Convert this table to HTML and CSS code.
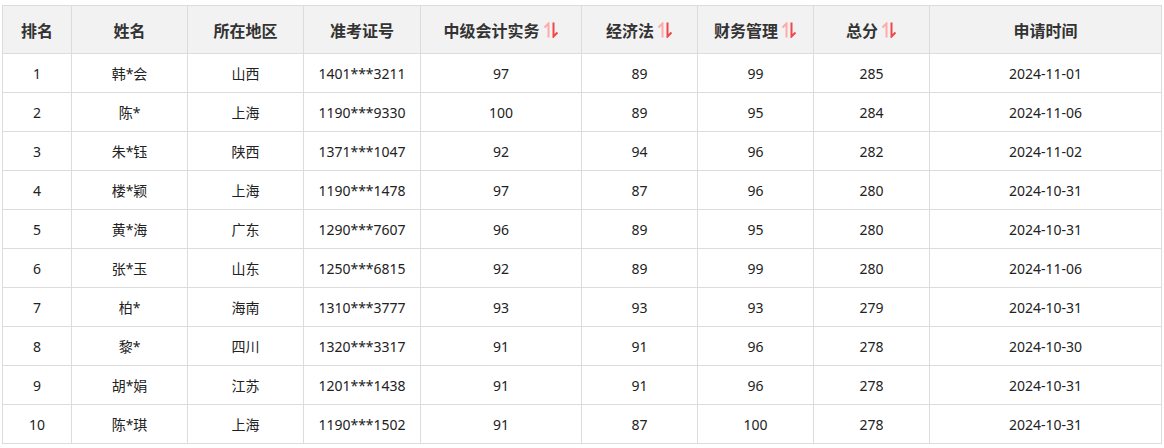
FILE: index.html
```html
<!DOCTYPE html>
<html lang="zh-CN">
<head>
<meta charset="utf-8">
<title>排名</title>
<link rel="stylesheet" href="styles.css">
</head>
<body>
<table class="rank">
  <colgroup>
    <col class="c-rank"><col class="c-name"><col class="c-area"><col class="c-id">
    <col class="c-sub1"><col class="c-sub2"><col class="c-sub3"><col class="c-total"><col class="c-date">
  </colgroup>
  <thead>
    <tr>
      <th>排名</th>
      <th>姓名</th>
      <th>所在地区</th>
      <th>准考证号</th>
      <th><span class="th-sort">中级会计实务<svg class="sort" viewBox="0 0 16 16" width="16" height="16"><path d="M5.5 15.5V1.5L1.5 5.5" fill="none" stroke="#ffaaaa" stroke-width="2"/><path d="M10.5 0.5V14.5L14.5 10.5" fill="none" stroke="#f04848" stroke-width="2"/></svg></span></th>
      <th><span class="th-sort">经济法<svg class="sort" viewBox="0 0 16 16" width="16" height="16"><path d="M5.5 15.5V1.5L1.5 5.5" fill="none" stroke="#ffaaaa" stroke-width="2"/><path d="M10.5 0.5V14.5L14.5 10.5" fill="none" stroke="#f04848" stroke-width="2"/></svg></span></th>
      <th><span class="th-sort">财务管理<svg class="sort" viewBox="0 0 16 16" width="16" height="16"><path d="M5.5 15.5V1.5L1.5 5.5" fill="none" stroke="#ffaaaa" stroke-width="2"/><path d="M10.5 0.5V14.5L14.5 10.5" fill="none" stroke="#f04848" stroke-width="2"/></svg></span></th>
      <th><span class="th-sort">总分<svg class="sort" viewBox="0 0 16 16" width="16" height="16"><path d="M5.5 15.5V1.5L1.5 5.5" fill="none" stroke="#ffaaaa" stroke-width="2"/><path d="M10.5 0.5V14.5L14.5 10.5" fill="none" stroke="#f04848" stroke-width="2"/></svg></span></th>
      <th>申请时间</th>
    </tr>
  </thead>
  <tbody>
    <tr><td>1</td><td>韩*会</td><td>山西</td><td>1401***3211</td><td>97</td><td>89</td><td>99</td><td>285</td><td>2024-11-01</td></tr>
    <tr><td>2</td><td>陈*</td><td>上海</td><td>1190***9330</td><td>100</td><td>89</td><td>95</td><td>284</td><td>2024-11-06</td></tr>
    <tr><td>3</td><td>朱*钰</td><td>陕西</td><td>1371***1047</td><td>92</td><td>94</td><td>96</td><td>282</td><td>2024-11-02</td></tr>
    <tr><td>4</td><td>楼*颖</td><td>上海</td><td>1190***1478</td><td>97</td><td>87</td><td>96</td><td>280</td><td>2024-10-31</td></tr>
    <tr><td>5</td><td>黄*海</td><td>广东</td><td>1290***7607</td><td>96</td><td>89</td><td>95</td><td>280</td><td>2024-10-31</td></tr>
    <tr><td>6</td><td>张*玉</td><td>山东</td><td>1250***6815</td><td>92</td><td>89</td><td>99</td><td>280</td><td>2024-11-06</td></tr>
    <tr><td>7</td><td>柏*</td><td>海南</td><td>1310***3777</td><td>93</td><td>93</td><td>93</td><td>279</td><td>2024-10-31</td></tr>
    <tr><td>8</td><td>黎*</td><td>四川</td><td>1320***3317</td><td>91</td><td>91</td><td>96</td><td>278</td><td>2024-10-30</td></tr>
    <tr><td>9</td><td>胡*娟</td><td>江苏</td><td>1201***1438</td><td>91</td><td>91</td><td>96</td><td>278</td><td>2024-10-31</td></tr>
    <tr><td>10</td><td>陈*琪</td><td>上海</td><td>1190***1502</td><td>91</td><td>87</td><td>100</td><td>278</td><td>2024-10-31</td></tr>
  </tbody>
</table>
</body>
</html>
```
FILE: styles.css
```css
html, body {
  margin: 0;
  background: #fff;
}
body {
  padding: 5px 2px 0 2px;
  font-family: "Noto Sans", "Noto Sans CJK SC", sans-serif;
  color: #222;
}
.rank {
  border-collapse: collapse;
  table-layout: fixed;
  width: 1160px;
  border: 1px solid #dcdcdc;
}
.c-rank { width: 69px; }
.c-name, .c-area, .c-sub2, .c-sub3, .c-total { width: 116px; }
.c-id { width: 117px; }
.c-sub1 { width: 161px; }
.c-date { width: 232px; }
.rank th, .rank td {
  border: 1px solid #dcdcdc;
  text-align: center;
  padding: 0;
}
.rank th {
  background: #f2f2f2;
  height: 47px;
  font-family: "Noto Sans CJK SC", sans-serif;
  font-size: 16px;
  font-weight: bold;
  color: #333;
}
.rank td {
  height: 38px;
  font-size: 14px;
  color: #222;
}
.th-sort {
  display: inline-flex;
  align-items: center;
  gap: 3px;
}
.sort {
  display: block;
}
```
